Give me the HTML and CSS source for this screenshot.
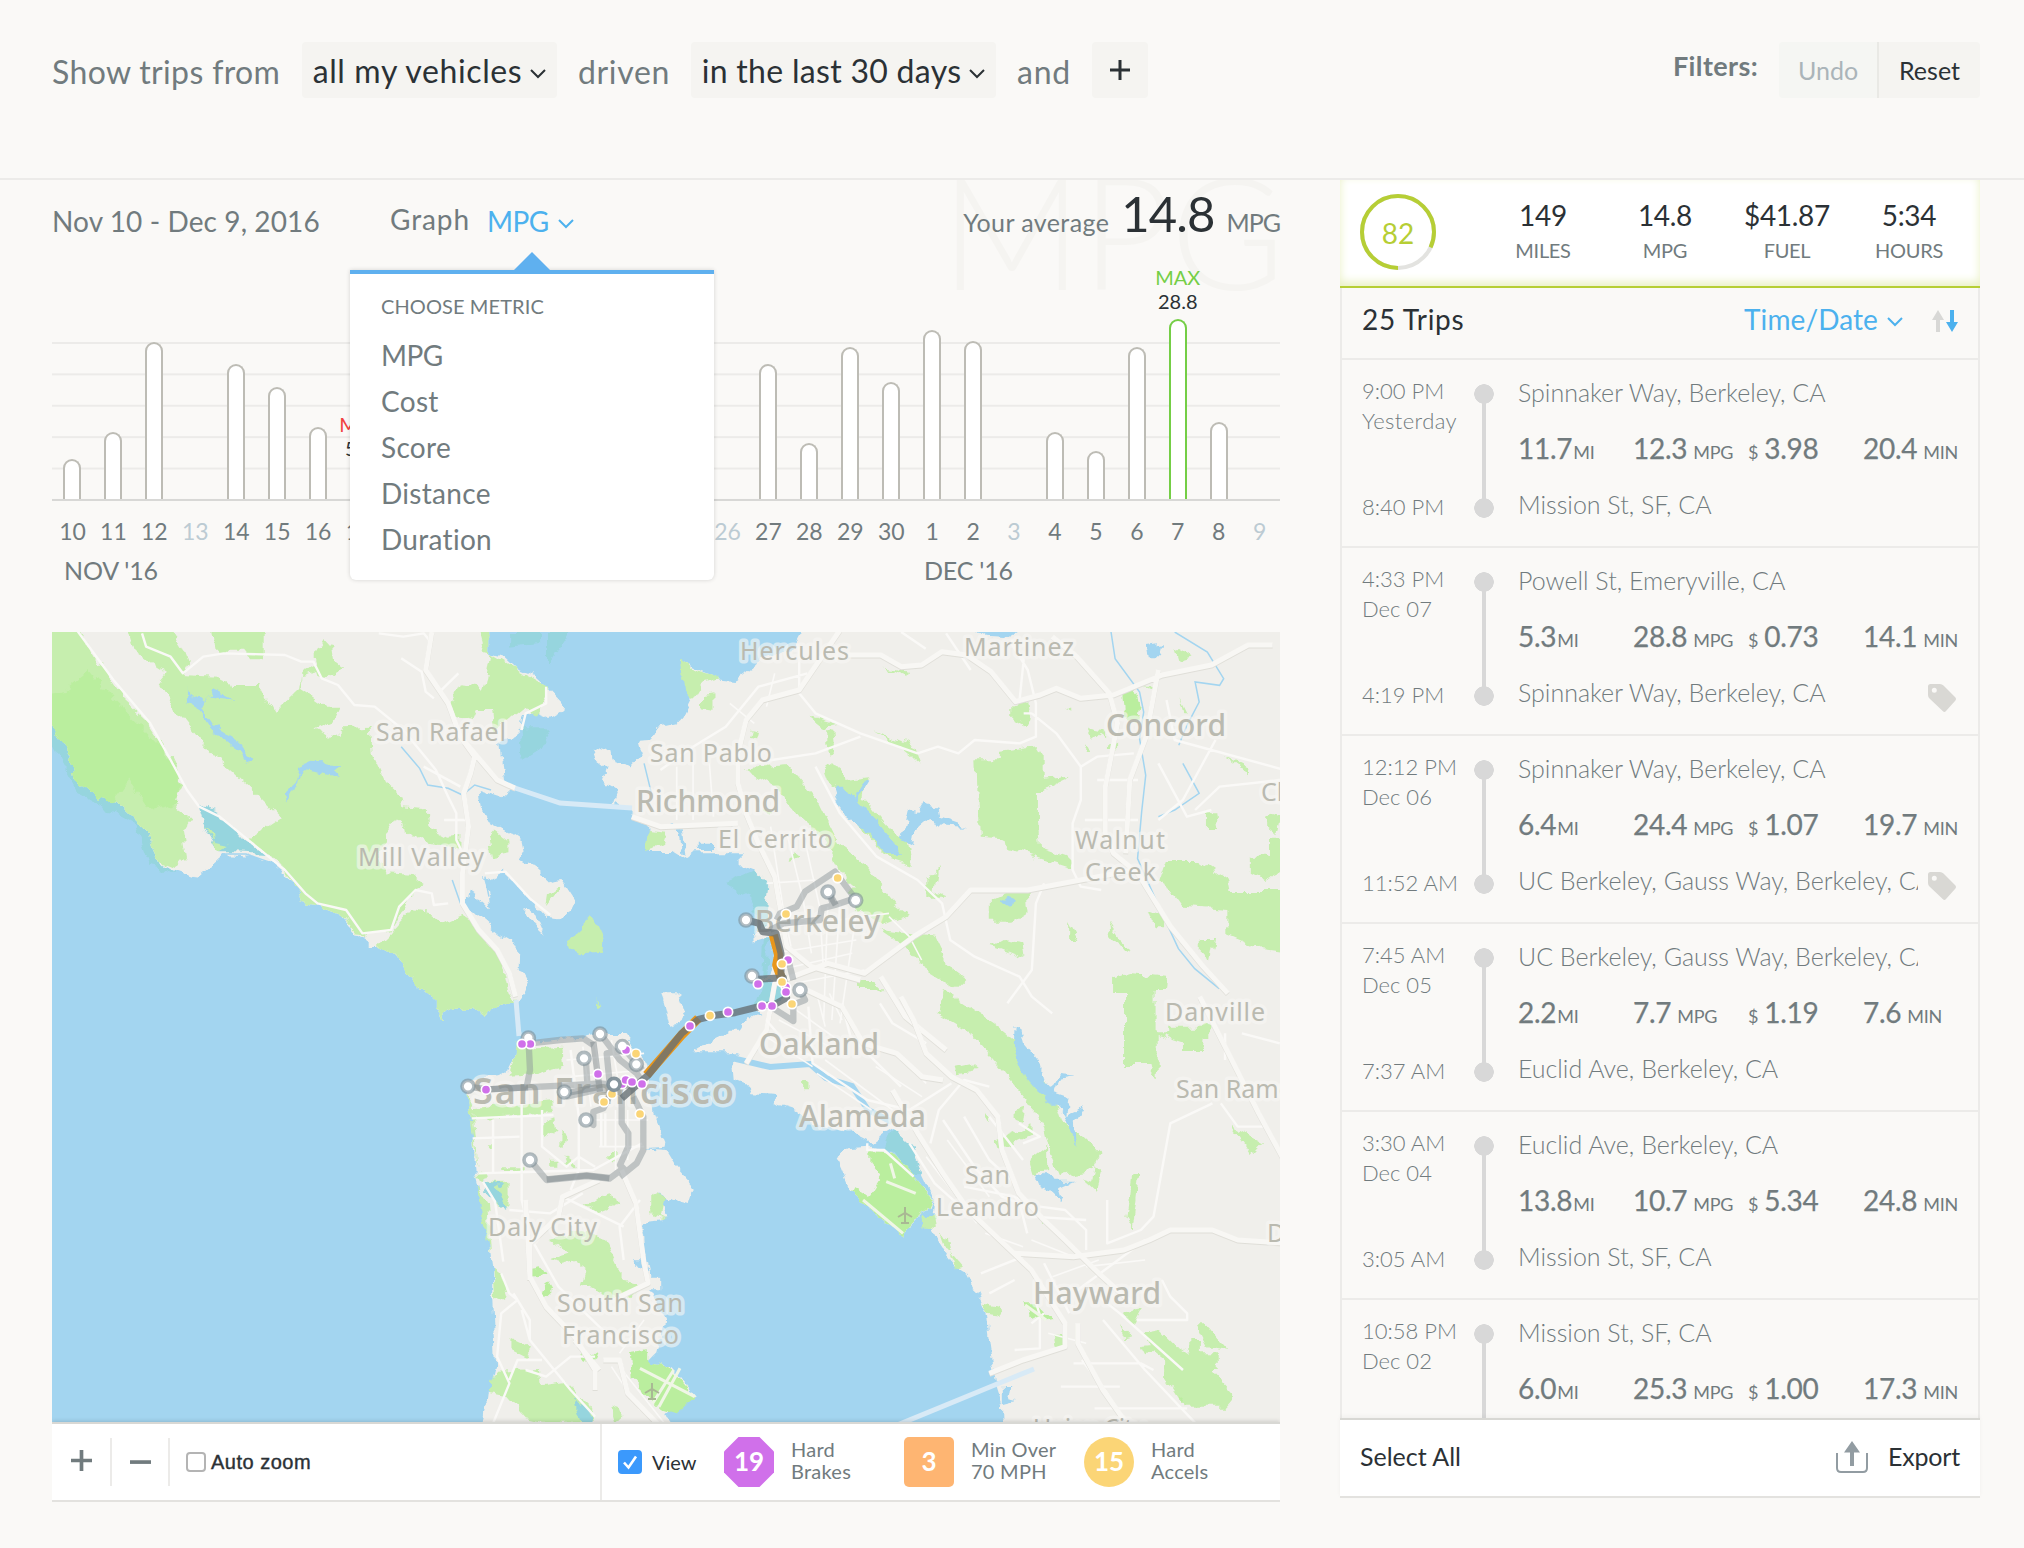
FILE: index.html
```html
<!DOCTYPE html>
<html lang="en">
<head>
<meta charset="utf-8">
<title>Trips</title>
<link rel="stylesheet" href="styles.css">
</head>
<body>
<header class="filters">
  <div class="query">
    <span class="word w1">Show trips from</span>
    <button class="pick p1"><span>all my vehicles</span><svg class="chev" viewBox="0 0 16 10"><path d="M1 1l7 7 7-7"/></svg></button>
    <span class="word w2">driven</span>
    <button class="pick p2"><span>in the last 30 days</span><svg class="chev" viewBox="0 0 16 10"><path d="M1 1l7 7 7-7"/></svg></button>
    <span class="word w3">and</span>
    <button class="pick add"><svg viewBox="0 0 20 20"><path d="M10 0v20M0 10h20"/></svg></button>
  </div>
  <div class="history">
    <span class="history-label">Filters:</span>
    <button class="undo">Undo</button><button class="reset">Reset</button>
  </div>
</header>

<main class="page">
  <section class="left">
    <div class="graph-head">
      <span class="watermark">MPG</span>
      <span class="range">Nov 10 - Dec 9, 2016</span>
      <span class="graph-word">Graph</span>
      <span class="metric"><span class="metric-name">MPG</span><svg class="chev blue" viewBox="0 0 16 10"><path d="M1 1l7 7 7-7"/></svg>
        <span class="menu">
          <span class="menu-title">CHOOSE METRIC</span>
          <span class="menu-item tight">MPG</span>
          <span class="menu-item">Cost</span>
          <span class="menu-item">Score</span>
          <span class="menu-item">Distance</span>
          <span class="menu-item">Duration</span>
        </span>
      </span>
      <span class="average"><span class="avg-word">Your average</span><b class="avg-num">14.8</b><span class="avg-unit">MPG</span></span>
    </div>
    <div class="plot">
      <div class="col"><i class="bar" style="height:40px"></i></div>
      <div class="col"><i class="bar" style="height:67px"></i></div>
      <div class="col"><i class="bar" style="height:157px"></i></div>
      <div class="col"></div>
      <div class="col"><i class="bar" style="height:135px"></i></div>
      <div class="col"><i class="bar" style="height:112px"></i></div>
      <div class="col"><i class="bar" style="height:72px"></i></div>
      <div class="col"><span class="peak min"><em>MIN</em>5.3</span><i class="bar low" style="height:33px"></i></div>
      <div class="col"></div><div class="col"></div><div class="col"></div><div class="col"></div>
      <div class="col"></div><div class="col"></div><div class="col"></div><div class="col"></div>
      <div class="col"></div>
      <div class="col"><i class="bar" style="height:135px"></i></div>
      <div class="col"><i class="bar" style="height:56px"></i></div>
      <div class="col"><i class="bar" style="height:152px"></i></div>
      <div class="col"><i class="bar" style="height:117px"></i></div>
      <div class="col"><i class="bar" style="height:169px"></i></div>
      <div class="col"><i class="bar" style="height:158px"></i></div>
      <div class="col"></div>
      <div class="col"><i class="bar" style="height:67px"></i></div>
      <div class="col"><i class="bar" style="height:48px"></i></div>
      <div class="col"><i class="bar" style="height:152px"></i></div>
      <div class="col"><span class="peak max"><em>MAX</em>28.8</span><i class="bar high" style="height:180px"></i></div>
      <div class="col"><i class="bar" style="height:77px"></i></div>
      <div class="col"></div>
    </div>
    <div class="days">
      <span>10</span><span>11</span><span>12</span><span class="off">13</span><span>14</span><span>15</span><span>16</span><span>17</span><span></span><span></span><span></span><span></span><span></span><span></span><span></span><span></span><span class="off">26</span><span>27</span><span>28</span><span>29</span><span>30</span><span>1</span><span>2</span><span class="off">3</span><span>4</span><span>5</span><span>6</span><span>7</span><span>8</span><span class="off">9</span>
    </div>
    <div class="months"><span class="nov">NOV '16</span><span class="dec">DEC '16</span></div>

    <svg class="map" viewBox="52 632 1228 790">
      <rect class="water" x="52" y="632" width="1228" height="790"/>
      <defs>
        <filter id="coast" x="0" y="0" width="1" height="1"><feTurbulence type="fractalNoise" baseFrequency=".07" numOctaves="3" seed="4"/><feDisplacementMap in="SourceGraphic" scale="12" xChannelSelector="R" yChannelSelector="G"/></filter>
      </defs>
      <g filter="url(#coast)">
      <rect x="40" y="620" width="1260" height="820" fill="none"/>
      <g transform="translate(40 620) scale(.408163 .333333)">
        <path class="shoal" d="M0 250L40 310 90 470 190 540 270 640 290 715 335 760 270 740 235 615 140 550 95 520 60 440 29 370 0 340zM1147 36h76v36l-76 8zM1247 36h50l-50 100zM1177 325h78l-30 65-40 30z"/>
        <path class="land" d="M-30 0H1103V100L1135 110 1165 145 1210 165 1245 205 1280 250 1278 275 1250 297 1205 275 1185 290 1180 325 1160 345 1125 365 1128 400 1138 480 1165 500 1135 535 1075 510 1080 560 1100 605 1150 635 1180 660 1185 690 1175 715 1215 745 1250 785 1280 780 1312 840 1300 870 1270 895 1240 890 1210 850 1165 790 1135 755 1105 775 1088 765 1105 865 1085 840 1050 812 1045 855 1075 890 1130 945 1170 975 1168 1040 1192 1095 1185 1115 1160 1155 1125 1160 1090 1185 1060 1160 1010 1160 985 1175 990 1210 965 1165V1125L920 1100 905 1060 875 1005 830 975H805L780 955 730 880 690 860 640 845 625 790 570 735 520 710 445 705 378 775 335 755 285 720 265 640 185 545 140 535 85 475 70 400 25 312-30 260z"/>
        <path class="land" d="M1190 860l25 20 25 70-35-40-17-25z"/>
        <path class="park" d="M-30 0H80L150 140 200 230 260 300 320 410 350 490 325 555 370 600 350 640 360 710 335 745 285 720 265 640 185 545 140 535 85 475 70 400 25 312-30 260z"/>
        <path class="park2" d="M-30 230L60 210 120 150 180 240 250 320 310 400 345 480 330 550 270 570 220 480 180 545 140 535 85 475 70 400 25 312-30 260z"/>
        <path class="park" d="M213 20H320L350 80 365 130 350 165 430 170 470 195 540 195 575 280 635 210 640 160 680 125 690 150 640 165V210L700 260 735 260 720 300 670 325 715 355 740 325 810 320 815 400 845 480 890 530 895 565 940 570 955 620 1000 650 1030 645V680L940 670 870 600 850 640 850 670 830 700 850 760 910 765 940 795 905 830 880 890 860 930 805 945 790 960 730 880 690 860 640 845 625 790 560 700 510 660 590 595 510 500 430 410 350 290 333 275 293 185 310 160 230 95z"/>
        <path class="park" d="M424 20H553V118H515L500 95 430 95zM695 57l18 25 5 40 22 20-30 30-25-5-15-60zM1072 20h31v80l-15-5zM1103 100l62 45 80 55-5 30-30 60-20-30-40 40-40 30-5-60-30 0-10 30-50-10-10-40 25-60 40 5 15 30zM1100 645l15-20 40 40v35l-45 10zM1280 798l-40 60 5-40 25-20zM890 575l60-5 5 60-40 20z"/>
        <path class="park" d="M1060 910L1075 940 1130 1010 1150 1110 1165 1155 1125 1160 1090 1185 1060 1160 1010 1160 985 1175 990 1210 965 1165V1125L920 1100 905 1060 875 1005 830 975 860 940 910 870 960 880 985 910 1030 885z"/>
        <path class="park" d="M1345 898L1368 915 1383 955 1380 995 1325 1000 1300 985 1287 960 1310 940zM1360 1138l18 14-5 6z"/>
        <path class="water" d="M360 205l10 30 20-5 20 20 20-40 50 30-60-10-25 30 30 55 60 45 35 60-10 15-20-45-65-55-30-60-35-25zM605 545l-5-25 25-30 10-50 30-15 70 5-20 20 20 25-40-15-50-10-20 45z"/>
        <path class="shoal" d="M387 555l50 20 65 85 50 42-80-5-35 0-30-60z"/>
        <path class="park" d="M405 625l15 10 5 30 40 10-30 20-15-40z"/>
      </g>
      <g transform="translate(660 620) scale(.408163 .333333)">
        <path class="shoal" d="M160 790l80-40 30 50-10 290h50v70h-80l20-70 5-150-40-110z"/>
        <path class="land" d="M365 0H1700V1300H80L150 1245 190 1240 205 1215 250 1185 235 1165 300 1140 310 1080H240V1070H270L285 1000 268 950 230 965 228 940 260 930 262 870 270 800 240 760 200 740V700H90L70 720 30 690-24 690-29 620-69 580-114 545-104 510-144 480-134 445-159 420-169 380-119 400-114 430-69 445-44 410-54 362-24 360-9 325 45 310 60 290 80 240 75 200 52 125 140 175 180 180 250 115 330 80z"/>
        <path class="land" d="M8 1140l22-22 30 70-5 22-30 10z"/>
        <path class="park" d="M52 120l25 25 70 30-40 10-25 55-20-30zM103 225l28-5v50l-28-5zM-30 630l50 5-10 40-45 15z"/>
        <path class="park" d="M400 432l40 15 15 30 60-8-20 60 60 90 50 50 10 65-50-20-70-90-80-140zM205 445l110-10 70 100 60 150 55 50 80 120-60-10-60-60-60-130-55-60-60-95zM460 810l55-5 90 80-60 30-60-40zM365 290l75 25-40 8zM405 330l22 5 5 60-10 15-17-40zM525 330l100 55 13 45-60-60zM863 262l40-15 8 60-20 15-28-20zM775 415h60l0-25 90-15 15 30V480l70-10-70 40-14 0v95l5 80 70 30 5 30-50-20-50-20-60-20-5-30-60-5zM540 140l70 15-5 15z"/>
        <path class="park" d="M1240 720l80 0 70 60 5 30h60l80 0v190l-60-10-85-45V870l-110-10-30-50-30-20zM1450 710h42V650h40v100l-50 30-32-20zM808 840l50-30 40 5 5 60-40 30-55 0zM540 930l130 20 30 80 50 45-25 30-80-60-40-60zM690 1115l70 30 40 50 60 70H700zM1110 1080l50-20 80 10-5 80 10 110H1140V1130l-30-5zM810 980l30-20 50 10 5 50-60-30zM480 1080l45 0 20 25-50 20zM1000 900l25 60-25 0zM1100 905l50 90-5 10-40-60zM650 790l30-50-10 70 40 20-60 0zM1340 580l25 0 5 50-30 0zM1200 870l35 15 0 40-20 0zM1320 960l40 0-10 60-30-20zM1380 405l65 40-5 15zM940 480l60-10-60 40z"/>
        <path class="park" d="M1265 85l40 30-30 10zM1490 580l30 10-10 50-20-20zM1050 325l40 10-25 25zM1045 370l10 25-15 0zM1095 370h20v18h-20zM1075 340h18v15zM225 325l15 5-5 25-15-5zM250 560l25 15-10 10zM330 695l15 15-20 10zM1275 235l18 45-8 0zM990 260h20v10zM1185 200h20v10z"/>
        <path class="park2" d="M1130 215l30-15 20 60-10 45-35-10z"/>
        <path class="water" d="M425 500l25 0 25 40 30-60 8 5-30 60 50 60 60 100-30 0-60-80-60-55zM605 570l30 10 15-30 30 10 5 30 70 30-60-3-40-18-30 30-5 50-30-20zM1190 75l45-8-5 45h-35zM770 20h130L850 54 800 50zM25 610l30 15 10 80-10-5-8-60zM95 665l30 0v25h-30zM835 845l20-15 20 10-20 20z"/>
      </g>
      <g transform="translate(40 1000) scale(.408163 .333333)">
        <path class="land" d="M1175 100L1200 130 1280 120 1340 115 1380 105 1430 105 1480 180 1490 220 1505 335 1537 430 1535 440 1480 445 1535 450 1560 500 1604 560 1590 615 1530 595 1510 580 1540 655 1475 665 1480 750 1495 830H1517V865H1495L1530 960 1510 1060 1490 1085 1550 1105 1609 1190 1560 1210 1532 1240 1573 1310H1075L1085 1220 1100 1200 1105 1150 1115 1100 1108 900V800L1090 640 1065 520 1058 400 1045 280 1065 240 1120 235 1150 210 1165 170z"/>
        <path class="park" d="M1168 125l50 20 62-5 5 60-70 25-65 5 15-60zM1055 325l200-25 5 40-200 12zM1045 280l10 30 15 200-12-100zM1230 370l30-15 5 40-30 25zM1275 395l15 10-5 40-10-10zM1245 485h25v15h-25zM1130 505h50v8h-50zM1070 515l30 10-15 25-15-10zM1100 545h48v75l-30-10-25-50zM1340 620l60-50 15 45-50 25zM1070 560l25 50 10 150-25-120zM1250 720l75-25 60 20 35 95v35l60 10-30 35h-60l-60-40 10-40-30-30-30 10-30-10 50-20zM1108 805l20 20 15 60-30 20zM1155 1015l50 30-10 30-40-25zM1100 1150l20-35 105-5 5 45 60-10 40 50 30 70-130 0-40-10-50-70-40-10zM1400 1225l20-10 10 30-20 20zM1500 575l30 20-10 60 20 5-40-20zM1285 460l20 20 5 30-20-20zM1095 430h10v12h-10zM1390 465h25v10h-25z"/>
        <path class="park2" d="M1445 1060l50-10 0 35 50 20 60 85-45 50-50-20-60-80zM1200 810l30-5 10 20-40 5zM1320 1050l20 30 30-30-10 30-30 5zM1225 870l20-20 10 20-20 20z"/>
        <path class="shoal" d="M1088 545l50 5-20 15 25 60-25-20-30-40zM1310 1190l50 80h-30z"/>
        <path class="water" d="M1455 775l25 0 10 50z"/>
      </g>
      <g transform="translate(640 1000) scale(.4209 .333333)">
        <path class="land" d="M1700-30H400L330 20 270 50 240 95H215L183 125 240 120 235 160 220 170 225 240 255 255 265 280 325 285V310L375 330 385 360 445 380 500 400 548 430 580 400 600 385 640 430 670 520 700 600 690 690 720 750 750 800 780 830 800 880 820 930 825 980 832 1050 845 1150 860 1210 862 1310H1700z"/>
        <path class="land" d="M50-20h40l15 55-30 30z"/>
        <path class="shoal" d="M600 385l40 45 30 90-30 0-35-65-25-15z"/>
        <path class="land" d="M465 465L495 445 550 440 600 455 640 510 670 560 700 600 690 630 665 645 630 690 628 710 615 700 500 570z"/>
        <path class="park2" d="M545 450l55 5 40 55 30 50 28 40-10 30-25 15-33 45-2 20-13-10-115-130 10-5 35 32 32-65-32-50z"/>
        <path class="park" d="M668 645l30 0 5 45-30-5zM712 705l20 10 5 35-15-10zM735 755l30 45-15 5zM720-30l50 40 70 60 60 60 20 30 60 130 20 80 45 30 50 60-20 50-80 15-20-60-15-80-40-80-50-80-80-120-80-60zM925 480l40-40 0 70-30 10zM845 420l90-50 0 30-70 40-15 10zM1150-30h75l0 130h30l0-20h100v40l-20 0-5 30-40 0 0-20-60-25v130l-20-40h-60zM1410 380l70 50-25 35zM1170 525l18 0-15 160-15-30zM1195 1000l40-10 35 45 35 30 0-45h30v40h40v50h-20l60 85-20 28h-100l-45-90 0-50-40-40zM1320 970l20 0 55 80-45-10zM1190 1035l30-5 0 20-20 10zM1140 975l30 40-15 5zM815 905l40 10 5 35-35-5zM980 1010l30 0v35l-25-5zM1145 935l45-10-20 50zM1080 505l20 0-15 70-35-40 25 10zM745 200l40-10 20 20-55 10zM890 330l25-10-5 50-20-10zM390 240h15v25h-15zM820 340l15 10-5 20z"/>
        <path class="park2" d="M910 910l30 0 40 50-20 5-30-20zM948 650l18 10-8 12zM1280 1180l10 10-5 15z"/>
        <path class="water" d="M890 75l10 5 10 50 40 60 10 60 15 20 20-45 40 5-40 10-12 40 35 15-5 50 40-20-20 40 5 70-15-30-15-60-30-40-30-20-30-50-30-90zM940 515l25 10 10 20 55 0-35 20 10 40-25-30-25-10zM862 1155l20 0-5 40 15 5-30 10z"/>
      </g>
      </g>

      <path class="estuary" d="M732 1058L770 1067 810 1064 826 1078 852 1086 868 1110 892 1122"/>
      <g transform="translate(40 620) scale(.408163 .333333)">
        <g class="brook">
          <path d="M885 380l45 65 20 50 50 10 35 20 30-30 40 15M1480 430l20 100M445 702l60 0 70 30M1010 780l20 70M1090 770l10 60"/>
          <path d="M2624 36l10 80 60 100 10 60-10 80 15 110-10 110-10 140 40 110 60 160 40 60 60 60M2780 36l80 60 40 80-10 20-60-10 10 60-30 70-20 60M2800 430l40 90-60 50-40 20"/>
        </g>
        <g class="road">
          <path d="M90 30L180 180 270 310 320 420 360 510 390 560 440 590 500 650 560 710 600 750 650 820 680 850 750 870 790 940 860 930 880 860 920 810 960 820 965 855 1000 850M250 40l10 40 60 30 30 50 50-50 50-10 150 5 40 20h30l20 50 40 20 40 60 50 5 70 70 40 60 40 60 30 80 20 50v80l20 50M830 40l60 10 50-10 20 30M885 115l50 40 10 60 20 20M1025 160l-50 60M1180 330l10-50 50-30v-50M940 440l90 60M990 600h60M1090 760l50-5 60 80 50 50"/>
          <path d="M1520 450l80-70 80-60 80-120 120-40M1860 80l0 140 40 60 110 60 140 60 50-20 50 20 40-40 110 10 40-20 0-100-20-100-40-80M1740 430l160-30 110-50M1900 440l60 140 90 130 100 70 60 70 20 110 60 50 110 60 30 60 50 50M2430 280l60 60 60 100 0 100-20 70 0 140 20 50 50 10M2550 440l40-30 90-10M2590 480h100M2430 280h-20M2690 600h-130M2740 600l60-60 80-180M2760 240l20 120 300 100M2830 570l60-70 150-20M2740 430l70 160 60-20M2110 36l60 50M2460 790l-20 60-10 200-60 100M2380 60l30 60-10 120M2280 150l-60-110"/>
          <path class="thin" d="M1560 440v160M1600 420v180M1640 430l10 160M1690 250l60 60M1800 160l-20 100M1790 620l30 240 20 120M1830 640l40 200 20 160M1870 640l40 220 10 200M1780 790l120-10M1800 1000l200-40M1810 1050l180-50M1930 860l-10 340M1960 850l-20 350M2000 880l-40 330M1830 920l250-40M1850 1090l170-40M2080 890l50 60 30 70"/>
        </g>
        <g class="highway">
          <path d="M960 36L945 150 1000 250 1030 350 1065 410 1055 460 1038 520 1050 620 1035 760 1035 850 1075 930 1120 990 1150 1060 1165 1130M1030 350L1120 480 1165 505M1450 590l70 30 190-10M1960 30l-100 180-90 30-40 60-20 100 0 90 20 90 30 90 40 100 30 210 60 60 120 40M1980 105l80 0 50 35 50-5 50-40 60 10 60 50 60 90 60-20 40-20 60 30 80-10 120-60 120-30 90-60 60 0M2480 50l60 60 80 110 20 90-30 190 0 140 20 60 60 60 80 160 80 120 60 80M2740 150l-30 200-40 130-10 220M2680 750l-260 60-140 0-60 80-80 60-120 110-90-30-130 60-20 140-50 100M2060 1070l60 120 100 100"/>
        </g>
      </g>
      <g transform="translate(40 1000) scale(.408163 .333333)">
        <g class="road">
          <path d="M1058 355l200-10M1060 415l115-5M1075 520l280-10 120-80M1110 360v160M1180 270v330l10 50M1375 340v100M1385 340v100M1300 150l20 200 0 160-20 60M1230 330l0 110 60 60 30-30 40 30M1085 545l30 60 20 180M1150 630l100 10 80-60M1210 730l60 130 100 120 60 60M1130 820l20 60 20 20-40 40-10 130 30 80-40 120M1160 880l40 80 0 60M1470 600l-50 80 10 100M1280 590l150 90M1190 1110l50 20 60-60 60 0M1230 1080l-60 0-20 60M1180 930l20 90 100 150 60 80"/>
          <path class="thin" d="M1330 140l20 180M1360 130l20 160M1400 120l20 150M1440 130l20 80M1290 180l190-20M1300 230l180-20M1360 360h130M1370 440h110M1410 330v180M1440 330v150M1400 1100l70 130M1420 1100l110 170M1480 960l-60 100"/>
        </g>
        <g class="highway">
          <path d="M1425 510l35 100 20 180 10 60-70 40M1190 600l10 230 40 90 70 90 50 100 0 60M1370 540l-90 50-10 60-70 80v110M1380 1080h40l20 100 80 100M1310 1020l60 90"/>
        </g>
      </g>
      <g transform="translate(640 1000) scale(.4209 .333333)">
        <g class="road">
          <path d="M400 20l10 170 70 60 60 50 100 30 100-80M480 10l20 100 120 150M570 10l30 60 80 60M300 60l60 90 60 20M690 430l20-100 60-90 60 20M640 430l60 120 80 90 60-30M720 360l80 150 60 80 60 30M770 350l60 130 60 70 30 150M830 350l80 130M900 370l50 40-40 20M770 560l120 30 40 60 130 10M540 430l0 20 40 0 70 80M950 620l60 10 50 60 0 60M810 820l100-50M830 880l60-40M960 790l60 150M1110 600v130l80-40 30-40 40-280 100-60M1200 720l-160 150M1390 100v80M1430 100l90 30M1380 310l40 70 60 0M1100 960l100 150 120 160M1080 880l60 60 150 170M890 1050l60-5v-100l-10-40M1030 1090h160l30 20M1000 1160h140M1080 1225h220M960 940l-30 30M1180 960l60 0 60 0 0-20-40-50-20-50M1050 1080l60 100 30 60"/>
          <path class="thin" d="M330 60l120 80M360 20l110 100M300 110l110 90M420 220l130 110M440 180l160 150M560 200l110 90M600 150l80 100M680 470l120 200M730 420l100 170M820 700l90 40M930 720l100 50M980 830l110-50M1060 800l140-20M970 1000l90 30M420-20l20 100M450-20l30 80"/>
        </g>
        <g class="highway">
          <path d="M600 270l60 130 60 120 60 110 100 120 50 60 80 160 0 70-100 40-80 40M1040 970l0 60 60 140 50 90M620-10l30 70 30 100 60 70 60 40 50 80 10 100 40 130 60 80 50 60 80 100 80 90M890 760l140 10 120-20 60-30 50-30 100 0 60 30 120 10M380-40l100 60 50 110 80 30 60 70 50 10M1330-10l60 150 80 200 60 140"/>
        </g>
        <g class="runway"><path d="M530 600l95 100M595 490l10 45M585 545l70 35M0 1105l130 85M95 1105l-50 115M80 1110l-50 100M915 915l50 45"/></g>
      </g>
      <path class="bridge" d="M890 1428L1002 1382 1034 1369M515 788L560 803 632 808M516 1000L519 1036"/>

      <g class="towns">
        <text x="376" y="741" textLength="130">San Rafael</text>
        <text x="358" y="866" textLength="126">Mill Valley</text>
        <text x="740" y="660" textLength="109">Hercules</text>
        <text x="964" y="656" textLength="110">Martinez</text>
        <text x="650" y="762" textLength="122">San Pablo</text>
        <text x="718" y="848" textLength="115">El Cerrito</text>
        <text x="1075" y="849" textLength="90">Walnut</text>
        <text x="1085" y="881" textLength="71">Creek</text>
        <text x="1261" y="801">Clayton</text>
        <text x="1165" y="1021" textLength="100">Danville</text>
        <text x="1176" y="1098">San Ramon</text>
        <text x="965" y="1184" textLength="45">San</text>
        <text x="936" y="1216" textLength="103">Leandro</text>
        <text x="1267" y="1242">Dublin</text>
        <text x="488" y="1236" textLength="109">Daly City</text>
        <text x="557" y="1312" textLength="126">South San</text>
        <text x="562" y="1344" textLength="117">Francisco</text>
        <text x="1033" y="1437" textLength="112">Union City</text>
        <g class="mid">
          <text x="1106" y="736" textLength="120">Concord</text>
          <text x="636" y="812" textLength="144">Richmond</text>
          <text x="755" y="932" textLength="125">Berkeley</text>
          <text x="759" y="1055" textLength="120">Oakland</text>
          <text x="799" y="1127" textLength="127">Alameda</text>
          <text x="1033" y="1304" textLength="128">Hayward</text>
        </g>
        <text class="big" x="473" y="1104" textLength="261">San Francisco</text>
      </g>
      <g class="plane">
        <path d="M905 1207v17M898 1217l7-4 7 4M901 1223h8"/>
        <path d="M652 1383v17M645 1393l7-4 7 4M648 1399h8"/>
      </g>

      <g transform="translate(440 840) scale(.333333)">
        <g class="over"><path d="M620 705L725 585 775 535M1000 285l16 60-6 30 14 40"/></g>
        <g class="route faint">
          <path d="M265 590l5 100-12 60M270 610l90-10 70-5 30 20M480 580l60 80 50 40 20 30M547 620l60 70M510 740l-10-100 60-12M437 650l5 80-10 30M438 840l22 15 0-40 30-10 20-40M545 770l0 80 20 30 0 40-25 55 20 20M580 770l30 60 0 100-20 40-50 40M270 960l50 60 120-12 68 8 40-30M373 755l10 14 100-22 60 10M140 748l240-12 100-6 100 10M1010 240l10-20 50-20 25-45 90-60 60 80-60 20-40 10-5 35-110 10-40 20M1165 155l15 40M1045 360l15 60M1080 450l15 30-50 20M1000 505l60 38v-45"/>
        </g>
        <g class="route soft">
          <path d="M460 605l20 150M84 740l60 8 120-6M320 1018l120-12 68 8M373 760l110-20M1165 155l22 40"/>
        </g>
        <g class="route">
          <path d="M545 775l80-70 100-125 50-42 50-12 60-8 80-20 40-5 35-20-10-60-75 5M918 240l40 10 10 25 40 5 15 60 0 60 10 30"/>
        </g>
        <g class="end">
          <circle cx="84" cy="739" r="18"/><circle cx="265" cy="594" r="18"/><circle cx="480" cy="582" r="18"/><circle cx="547" cy="620" r="18"/><circle cx="432" cy="655" r="18"/><circle cx="589" cy="673" r="18"/><circle cx="373" cy="756" r="18"/><circle cx="438" cy="840" r="18"/><circle cx="270" cy="960" r="18"/><circle cx="918" cy="240" r="18"/><circle cx="936" cy="408" r="18"/><circle cx="1164" cy="156" r="18"/><circle cx="1080" cy="450" r="18"/><circle cx="1247" cy="181" r="18"/>
        </g>
        <g class="brake"><circle cx="271" cy="612" r="14"/><circle cx="246" cy="612" r="14"/><circle cx="138" cy="749" r="14"/><circle cx="474" cy="702" r="14"/><circle cx="558" cy="630" r="14"/><circle cx="546" cy="732" r="14"/><circle cx="557" cy="720" r="14"/><circle cx="576" cy="726" r="14"/><circle cx="606" cy="732" r="14"/><circle cx="750" cy="558" r="14"/><circle cx="864" cy="516" r="14"/><circle cx="966" cy="498" r="14"/><circle cx="996" cy="498" r="14"/><circle cx="1044" cy="360" r="14"/><circle cx="1038" cy="442" r="14"/><circle cx="1038" cy="456" r="14"/><circle cx="954" cy="432" r="14"/></g>
        <g class="accel"><circle cx="588" cy="641" r="14"/><circle cx="516" cy="762" r="14"/><circle cx="492" cy="786" r="14"/><circle cx="600" cy="822" r="14"/><circle cx="810" cy="527" r="14"/><circle cx="1056" cy="492" r="14"/><circle cx="1026" cy="426" r="14"/><circle cx="1026" cy="372" r="14"/><circle cx="1038" cy="222" r="14"/><circle cx="1193" cy="114" r="14"/></g>
        <g class="end strong"><circle cx="522" cy="733" r="18"/></g>
        <g class="dot"><circle cx="1247" cy="181" r="13"/><circle cx="547" cy="618" r="13"/></g>
      </g>
    </svg>

    <div class="map-bar">
      <div class="zooms">
        <button class="zoom"><svg viewBox="0 0 20 20"><path d="M10 0v20M0 10h20"/></svg></button>
        <button class="zoom"><svg viewBox="0 0 20 20"><path d="M0 11.500h20"/></svg></button>
        <label class="auto"><i class="box"></i>Auto zoom</label>
      </div>
      <div class="events">
        <i class="box on"><svg viewBox="0 0 24 24"><path d="M6 12.500l4.500 5L18 6.500"/></svg></i>
        <span class="view">View</span>
        <span class="badge oct">19</span><span class="event">Hard<br>Brakes</span>
        <span class="badge sq">3</span><span class="event">Min Over<br>70 MPH</span>
        <span class="badge circ">15</span><span class="event">Hard<br>Accels</span>
      </div>
    </div>
  </section>

  <aside class="right">
    <div class="summary">
      <div class="score"><svg viewBox="0 0 76 76"><circle class="track" cx="38" cy="38" r="36"/><circle class="value" cx="38" cy="38" r="36" pathLength="100"/></svg><span>82</span></div>
      <div class="stat"><b>149</b><span>MILES</span></div>
      <div class="stat"><b>14.8</b><span>MPG</span></div>
      <div class="stat"><b>$41.87</b><span>FUEL</span></div>
      <div class="stat"><b>5:34</b><span>HOURS</span></div>
    </div>
    <div class="list-head">
      <span class="count">25 Trips</span>
      <span class="sort">Time/Date<svg class="chev blue" viewBox="0 0 16 10"><path d="M1 1l7 7 7-7"/></svg></span>
      <svg class="order" viewBox="0 0 26 22"><path class="up" d="M6 0l6 10H8v12H4V10H0z"/><path class="down" d="M18 0h4v12h4l-6 10-6-10h4z"/></svg>
    </div>
    <div class="trips">
      <article class="trip">
        <div class="times"><p>9:00 PM<br><span class="wide">Yesterday</span></p><p>8:40 PM</p></div>
        <div class="rail"></div>
        <div class="info"><p class="place">Spinnaker Way, Berkeley, CA</p>
          <p class="nums"><span><b>11.7</b><small>MI</small></span><span><b>12.3</b> <small>MPG</small></span><span><small>$</small> <b>3.98</b></span><span><b>20.4</b> <small>MIN</small></span></p>
          <p class="place">Mission St, SF, CA</p></div>
      </article>
      <article class="trip">
        <div class="times"><p>4:33 PM<br>Dec 07</p><p>4:19 PM</p></div>
        <div class="rail"></div>
        <div class="info"><p class="place">Powell St, Emeryville, CA</p>
          <p class="nums"><span><b>5.3</b><small>MI</small></span><span><b>28.8</b> <small>MPG</small></span><span><small>$</small> <b>0.73</b></span><span><b>14.1</b> <small>MIN</small></span></p>
          <p class="place">Spinnaker Way, Berkeley, CA</p></div>
        <svg class="tag" viewBox="0 0 28 28"><path fill-rule="evenodd" d="M2.500 0H12q2 0 3.500 1.500L27 13q2 2 0 4L18 27q-1.500 1.800-3.300 0L1.500 14.500Q0 13 0 11V2.500Q0 0 2.500 0zM6.300 3.800a2.500 2.500 0 1 0 0 5 2.500 2.500 0 0 0 0-5z"/></svg>
      </article>
      <article class="trip">
        <div class="times"><p>12:12 PM<br>Dec 06</p><p>11:52 AM</p></div>
        <div class="rail"></div>
        <div class="info"><p class="place">Spinnaker Way, Berkeley, CA</p>
          <p class="nums"><span><b>6.4</b><small>MI</small></span><span><b>24.4</b> <small>MPG</small></span><span><small>$</small> <b>1.07</b></span><span><b>19.7</b> <small>MIN</small></span></p>
          <p class="place">UC Berkeley, Gauss Way, Berkeley, CA</p></div>
        <svg class="tag" viewBox="0 0 28 28"><path fill-rule="evenodd" d="M2.500 0H12q2 0 3.500 1.500L27 13q2 2 0 4L18 27q-1.500 1.800-3.300 0L1.500 14.500Q0 13 0 11V2.500Q0 0 2.500 0zM6.300 3.800a2.500 2.500 0 1 0 0 5 2.500 2.500 0 0 0 0-5z"/></svg>
      </article>
      <article class="trip">
        <div class="times"><p>7:45 AM<br>Dec 05</p><p>7:37 AM</p></div>
        <div class="rail"></div>
        <div class="info"><p class="place">UC Berkeley, Gauss Way, Berkeley, CA</p>
          <p class="nums"><span><b>2.2</b><small>MI</small></span><span><b>7.7</b> <small>MPG</small></span><span><small>$</small> <b>1.19</b></span><span><b>7.6</b> <small>MIN</small></span></p>
          <p class="place">Euclid Ave, Berkeley, CA</p></div>
      </article>
      <article class="trip">
        <div class="times"><p>3:30 AM<br>Dec 04</p><p>3:05 AM</p></div>
        <div class="rail"></div>
        <div class="info"><p class="place">Euclid Ave, Berkeley, CA</p>
          <p class="nums"><span><b>13.8</b><small>MI</small></span><span><b>10.7</b> <small>MPG</small></span><span><small>$</small> <b>5.34</b></span><span><b>24.8</b> <small>MIN</small></span></p>
          <p class="place">Mission St, SF, CA</p></div>
      </article>
      <article class="trip">
        <div class="times"><p>10:58 PM<br>Dec 02</p><p></p></div>
        <div class="rail"></div>
        <div class="info"><p class="place">Mission St, SF, CA</p>
          <p class="nums"><span><b>6.0</b><small>MI</small></span><span><b>25.3</b> <small>MPG</small></span><span><small>$</small> <b>1.00</b></span><span><b>17.3</b> <small>MIN</small></span></p>
          <p class="place"></p></div>
      </article>
    </div>
    <div class="list-foot">
      <span>Select All</span>
      <span class="export"><svg viewBox="0 0 32 32"><path class="tray" d="M1 12v15q0 4 4 4h22q4 0 4-4V12"/><path class="arrow" d="M16 0l8 11.500h-6V25h-4V11.500H8z"/></svg><span>Export</span></span>
    </div>
  </aside>
</main>
</body>
</html>
```
FILE: styles.css
```css
* { box-sizing: border-box; margin: 0; padding: 0; }
body {
  width: 2024px; height: 1548px; overflow: hidden;
  background: #faf9f7; color: #717b7e;
  font-family: Lato, "Open Sans", sans-serif; font-size: 25px;
}
button { font: inherit; border: 0; color: inherit; background: none; }
em, i, b { font-style: normal; font-weight: inherit; }
.chev { width: 16px; height: 10px; fill: none; stroke: #2b3135; stroke-width: 2; }
.chev.blue { stroke: #4cb1ee; }

/* filter header */
.filters { display: flex; justify-content: space-between; height: 180px; padding: 42px 44px 0 52px; border-bottom: 2px solid #ecebe9; }
.query { display: flex; height: 56px; align-items: center; font-size: 32px; }
.word { padding-top: 3px; white-space: nowrap; }
.w1 { width: 229px; letter-spacing: .35px; }
.w2 { width: 92px; letter-spacing: .65px; }
.w3 { width: 54px; letter-spacing: .8px; }
.pick { display: flex; align-items: center; justify-content: center; gap: 8px; height: 56px; margin: 0 21px; border-radius: 4px; background: #f5f4f1; color: #2b3135; white-space: nowrap; }
.pick .chev { margin-top: 8px; }
.p1 { width: 255px; letter-spacing: .62px; }
.p2 { width: 305px; letter-spacing: .3px; }
.add { width: 56px; }
.add svg { width: 20px; height: 20px; stroke: #2b3135; stroke-width: 3; }
.history { display: flex; height: 56px; align-items: center; }
.history-label { font-size: 27px; font-weight: 700; letter-spacing: .37px; margin-right: 21px; padding-bottom: 10px; }
.undo { width: 100px; height: 56px; background: #f5f6f3; color: #aab4b9; border-right: 2px solid #e9e9e5; border-radius: 4px 0 0 4px; }
.reset { width: 101px; height: 56px; background: #f5f4f1; color: #2b3135; border-radius: 0 4px 4px 0; }

.page { display: flex; justify-content: space-between; padding: 0 44px 0 52px; }
.left { width: 1228px; }
.right { width: 640px; }

/* graph */
.graph-head { position: relative; display: flex; align-items: center; height: 82px; font-size: 28px; }
.watermark { position: absolute; right: -4px; top: -40px; font-size: 156px; font-weight: 300; line-height: 180px; letter-spacing: -1px; color: #f5f4f1; z-index: -1; }
.range { width: 338px; white-space: nowrap; letter-spacing: .1px; }
.graph-word { width: 80px; padding-bottom: 4px; margin-right: 17px; letter-spacing: .9px; }
.metric { position: relative; display: flex; align-items: center; gap: 9px; color: #4cb1ee; }
.metric-name { width: 62px; letter-spacing: -.5px; }
.metric .chev { margin-top: 6px; }
.menu { position: absolute; z-index: 5; left: -137px; top: 66px; width: 364px; height: 310px; padding: 19px 31px; border-top: 4px solid #5fb0ef; border-radius: 0 0 6px 6px; background: #fff; color: #717b7e; box-shadow: 0 0 4px rgba(0, 0, 0, .16); display: flex; flex-direction: column; letter-spacing: .3px; }
.menu::before { content: ""; position: absolute; left: 164px; top: -22px; border: solid transparent; border-width: 0 18px 18px; border-bottom-color: #5fb0ef; }
.menu-title { font-size: 20px; line-height: 26px; margin-bottom: 13px; letter-spacing: .1px; }
.menu-item { line-height: 46px; }
.tight { letter-spacing: -.5px; }
.average { margin-left: auto; display: flex; align-items: baseline; padding-bottom: 17px; white-space: nowrap; font-size: 25px; letter-spacing: .4px; }
.avg-num { font-size: 49px; color: #2b3135; margin: 0 12px; letter-spacing: -.9px; }
.avg-unit { letter-spacing: -1px; }
.plot { display: flex; align-items: flex-end; height: 159px; margin-top: 80px; border-bottom: 2px solid #d8d8d6; background: linear-gradient(#ecebe9 2px, transparent 2px) 0 0 / 100% 31.4px; }
.col { position: relative; flex: 1; display: flex; justify-content: center; }
.bar { width: 18px; border: 2px solid #bdbcb5; border-bottom: 0; border-radius: 9px 9px 0 0; background: #fff; }
.bar.high { border-color: #74ce46; }
.bar.low { border-color: #f1413e; }
.peak { position: absolute; bottom: 100%; margin-bottom: 6px; display: flex; flex-direction: column; align-items: center; font-size: 20px; line-height: 24px; color: #2b3135; }
.max em { color: #74ce46; }
.min em { color: #f1413e; }
.days { display: flex; font-size: 23px; line-height: 60px; }
.days span { flex: 1; text-align: center; }
.days .off { color: #bccbd3; }
.months { display: flex; height: 19px; line-height: 19px; margin-bottom: 52px; padding-left: 12px; letter-spacing: -.2px; }
.nov { width: 860px; }

/* map */
.map { display: block; width: 1228px; height: 790px; }
.map .water { fill: #a3d5f0; }
.land { fill: #f0efeb; }
.park { fill: #c6eeae; }
.park2 { fill: #baee9e; }
.shoal { fill: #96d5de; }
.estuary { fill: none; stroke: #a3d5f0; stroke-width: 6; }
.brook path { fill: none; stroke: #a3d5f0; stroke-width: 1.5; vector-effect: non-scaling-stroke; }
.road path { fill: none; stroke: #faf9f7; stroke-width: 2.4; vector-effect: non-scaling-stroke; stroke-linejoin: round; }
.road .thin { stroke-width: 1.6; }
.highway path { fill: none; stroke: #f8f7f4; stroke-width: 5; vector-effect: non-scaling-stroke; stroke-linejoin: round; filter: drop-shadow(0 3px 1px #dfded8); }
.runway path { fill: none; stroke: #f0f6e6; stroke-width: 3; vector-effect: non-scaling-stroke; }
.bridge { fill: none; stroke: #d8eaf6; stroke-width: 5; }
.towns { font: 25px "Noto Sans", sans-serif; fill: #babab0; stroke: rgba(248, 247, 244, .6); stroke-width: 7; stroke-linejoin: round; paint-order: stroke; }
.mid { font-size: 30px; font-weight: 500; }
.big { font-size: 36px; font-weight: 600; }
.plane path { fill: none; stroke: #a9b894; stroke-width: 2; }
.over path { fill: none; stroke: #e8961c; stroke-width: 27; stroke-linejoin: round; }
.route path { fill: none; stroke: #667176; stroke-width: 21; stroke-linejoin: round; opacity: .8; }
.route.faint path { stroke: #8e979b; stroke-width: 19; opacity: .5; }
.route.soft path { stroke: #7d878c; stroke-width: 19; opacity: .5; }
.end circle { fill: #fff; stroke: #7f8f98; stroke-opacity: .6; stroke-width: 11; }
.strong circle { stroke-opacity: .95; }
.brake circle { fill: #d070ea; stroke: #fff; stroke-width: 5; }
.accel circle { fill: #fbd576; stroke: #fff; stroke-width: 5; }
.dot circle { fill: #fff; }

.map-bar { display: flex; height: 80px; border-top: 2px solid #d8d8d4; border-bottom: 2px solid #e3e2df; background: #fff; position: relative; box-shadow: 0 -1px 4px rgba(0, 0, 0, .14); clip-path: inset(-6px 0 0 0); }
.zooms { display: flex; align-items: center; width: 550px; border-right: 2px solid #ecebe9; }
.zoom { width: 60px; height: 48px; border-right: 2px solid #ecebe9; display: flex; align-items: center; justify-content: center; }
.zoom + .zoom { width: 58px; }
.zoom svg { width: 21px; height: 21px; margin-top: -3px; stroke: #717b7e; stroke-width: 3.5; }
.auto { display: flex; align-items: center; gap: 5px; margin-left: 16px; font: 20px "Liberation Sans", Arial, sans-serif; letter-spacing: .5px; color: #2b3135; -webkit-text-stroke: .4px #2b3135; }
.box { width: 20px; height: 20px; border: 2px solid #b4b4b4; border-radius: 4px; background: #fff; }
.box.on { width: 24px; height: 24px; border: 0; background: #3b99fc; }
.box svg { display: block; fill: none; stroke: #fff; stroke-width: 2.6; }
.events { flex: 1; display: flex; align-items: center; padding-left: 16px; font-size: 20px; line-height: 22px; }
.view { width: 72px; padding: 0 0 1px 10px; margin-right: 10px; color: #2b3135; }
.badge { width: 50px; height: 50px; margin-right: 17px; display: flex; align-items: center; justify-content: center; color: #fff; font-size: 26px; font-weight: 700; padding-bottom: 2px; }
.oct { background: #d070ea; clip-path: polygon(29% 0, 71% 0, 100% 29%, 100% 71%, 71% 100%, 29% 100%, 0 71%, 0 29%); }
.sq { background: #feb572; border-radius: 5px; }
.circ { background: #fbd576; border-radius: 50%; }
.event { width: 113px; padding-bottom: 4px; letter-spacing: .25px; }

/* trip panel */
.summary { display: flex; height: 108px; padding-left: 20px; background: #fff; border-bottom: 2px solid #b6ce35; box-shadow: inset 0 -4px 10px #e9f0c3; }
.score { position: relative; width: 76px; height: 76px; margin: 14px 46px 0 0; display: flex; align-items: center; justify-content: center; font-size: 28px; color: #b6ce35; padding-top: 1px; }
.score svg { position: absolute; inset: 0; fill: none; stroke-width: 4; }
.track { stroke: #e3e3e0; }
.value { stroke: #b6ce35; stroke-dasharray: 82 100; transform: rotate(90deg); transform-origin: center; }
.stat { width: 122px; display: flex; flex-direction: column; align-items: center; padding-top: 18px; font-size: 20px; line-height: 34px; letter-spacing: -.3px; }
.stat b { font-size: 28px; line-height: 35px; color: #2b3135; }
.list-head { display: flex; align-items: center; height: 72px; padding: 0 20px 8px; border: solid #ecebe9; border-width: 0 2px 2px; font-size: 28px; }
.count { color: #2b3135; margin-right: auto; letter-spacing: .65px; }
.sort { display: flex; align-items: center; gap: 9px; color: #4cb1ee; letter-spacing: .1px; }
.sort .chev { margin-top: 6px; }
.order { width: 26px; height: 22px; margin: 4px 0 0 29px; }
.up { fill: #d8d8d6; }
.down { fill: #4cb1ee; }
.trips { height: 1058px; overflow: hidden; border: solid #ecebe9; border-width: 0 2px; }
.trip { position: relative; display: flex; height: 188px; padding: 16px 0 0 20px; border-bottom: 2px solid #ecebe9; }
.times { width: 112px; height: 146px; display: flex; flex-direction: column; justify-content: space-between; font-size: 22px; font-weight: 300; line-height: 30px; white-space: nowrap; }
.wide { letter-spacing: .4px; }
.rail { width: 20px; height: 134px; margin: 8px 24px 0 0; background: radial-gradient(circle 10px at 10px 10px, #d8d8d8 9.5px, transparent 10px), radial-gradient(circle 10px at 10px 124px, #d8d8d8 9.5px, transparent 10px), linear-gradient(#d8d8d8, #d8d8d8) 8px 10px / 4px 114px no-repeat; }
.info { width: 441px; height: 142px; margin-top: 1px; display: flex; flex-direction: column; justify-content: space-between; }
.place { width: 400px; height: 30px; line-height: 30px; font-weight: 300; overflow: hidden; white-space: nowrap; }
.nums { display: grid; grid-template-columns: 115px 115px 115px 1fr; margin-top: 4px; font-size: 28px; line-height: 34px; letter-spacing: -.3px; white-space: nowrap; -webkit-text-stroke: .25px; }
.nums small { font-size: 18px; letter-spacing: -.2px; -webkit-text-stroke: 0; }
.nums > span { display: flex; align-items: baseline; gap: 6px; }
.nums > span:first-child { gap: 1px; }
.tag { position: absolute; right: 22px; top: 136px; width: 28px; height: 28px; fill: #d9d8d4; }
.list-foot { position: relative; display: flex; align-items: center; justify-content: space-between; height: 80px; padding: 0 20px; border-top: 2px solid #d8d8d4; border-bottom: 2px solid #e3e2df; background: #fff; color: #2b3135; box-shadow: 0 -2px 4px rgba(0, 0, 0, .04); }
.list-foot > span:first-child, .export span { padding-bottom: 4px; }
.export { display: flex; align-items: center; gap: 20px; letter-spacing: -.2px; }
.export svg { width: 32px; height: 32px; margin-top: -2px; }
.tray { fill: none; stroke: #929ca2; stroke-width: 2; }
.arrow { fill: #929ca2; }
```
